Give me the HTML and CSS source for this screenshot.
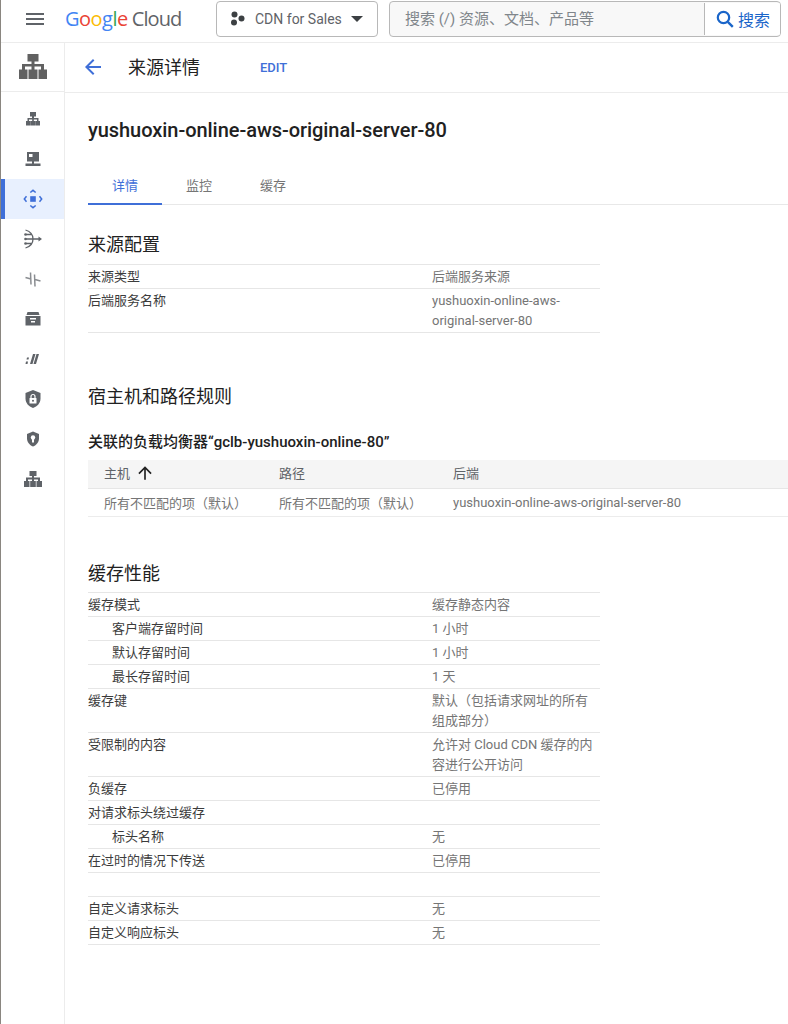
FILE: index.html
```html
<!DOCTYPE html>
<html lang="zh-CN">
<head>
<meta charset="utf-8">
<title>来源详情</title>
<link rel="stylesheet" href="styles.css">
</head>
<body>
<div class="app">
<header class="topbar">
  <button class="menu" aria-label="menu"><svg width="24" height="24" viewBox="0 0 24 24"><path d="M3 18h18v-2H3v2zm0-5h18v-2H3v2zm0-7v2h18V6H3z" fill="#5f6368"/></svg></button>
  <div class="logo"><span class="lb">G</span><span class="lr">o</span><span class="ly">o</span><span class="lb">g</span><span class="lg">l</span><span class="lr">e</span><span class="cloud">Cloud</span></div>
  <button class="project">
    <svg width="18" height="18" viewBox="0 0 18 18" fill="#3c4043"><circle cx="5.500" cy="4.500" r="3"/><circle cx="5" cy="12.500" r="3"/><circle cx="12.500" cy="8.500" r="3"/></svg>
    <span class="project-name">CDN for Sales</span>
    <span class="caret"></span>
  </button>
  <div class="search">
    <span class="search-text">搜索 (/) 资源、文档、产品等</span>
    <span class="search-btn"><svg width="20" height="20" viewBox="0 0 20 20"><circle cx="8.500" cy="8.500" r="5.700" fill="none" stroke="#1a65c9" stroke-width="2.200"/><path d="M12.800 12.800l5 5" stroke="#1a65c9" stroke-width="2.400"/></svg>搜索</span>
  </div>
</header>
<div class="body">
<nav class="sidebar">
  <div class="side-head"><svg width="28" height="25" viewBox="0 0 28 25" fill="#616161"><path d="M8.500 0h11v7.500h-4v2.500H25v5.500h3V25h-8.500v-9.500H22v-3h-6.500v3H18.500V25h-9v-9.500h3v-3H6v3h2.500V25H0v-9.500h3V10h9.500V7.500h-4z"/></svg></div>
  <a class="side-item"><svg width="16" height="16" viewBox="0 0 16 16" fill="#5f6368"><path d="M5 1h6v4.500H9V7h4.500v3H15v4.500h-4.500V10H12V8.500H8.800V10H10.300v4.500H5.700V10h1.500V8.500H4V10h1.500v4.500H1V10h1.500V7H7V5.500H5z"/></svg></a>
  <a class="side-item"><svg width="18" height="18" viewBox="0 0 18 18" fill="#5f6368"><path d="M3 2h12v9.500H3zM1.500 13.500h15V16h-15z"/><rect x="5" y="4" width="3.500" height="3" fill="#fff"/><rect x="8" y="11" width="2" height="3"/></svg></a>
  <a class="side-item active"><svg width="20" height="20" viewBox="0 0 20 20" fill="none" stroke="#3f6fd8" stroke-width="1.500"><rect x="7.200" y="7.200" width="5.600" height="5.600" fill="#3f6fd8" stroke="none"/><path d="M7.300 3.500L10 1.300l2.700 2.200M7.300 16.500l2.700 2.200 2.700-2.200M3.500 7.300L1.300 10l2.200 2.700M16.500 7.300l2.200 2.700-2.200 2.700"/></svg></a>
  <a class="side-item"><svg width="20" height="20" viewBox="0 0 20 20" fill="none" stroke="#5f6368" stroke-width="1.300"><path d="M2.500 1c5 1.500 7.500 5 7.500 9s-2.500 7.500-7.500 9M3 5.500h5.500M3 10h14M3 14.500h5.500"/><circle cx="2.500" cy="5.500" r="1.300" fill="#5f6368" stroke="none"/><circle cx="2.500" cy="10" r="1.300" fill="#5f6368" stroke="none"/><circle cx="2.500" cy="14.500" r="1.300" fill="#5f6368" stroke="none"/><path d="M15.500 7.500l3.500 2.500-3.500 2.500z" fill="#5f6368" stroke="none"/></svg></a>
  <a class="side-item dim"><svg width="18" height="18" viewBox="0 0 18 18" fill="none" stroke="#8a8d91" stroke-width="1.500"><path d="M1.500 7.500L7 9M11 9.500l5.500 1.500M6.500 2.500l.5 12M10.500 4.500l.5 12"/></svg></a>
  <a class="side-item"><svg width="18" height="18" viewBox="0 0 18 18" fill="#5f6368"><path d="M3.500 2h11l1 3h-13zM1.500 6h15v9.500h-15z"/><rect x="6" y="8" width="6" height="1.500" fill="#fff"/><rect x="7" y="11" width="4" height="1.500" fill="#fff"/></svg></a>
  <a class="side-item"><svg width="18" height="18" viewBox="0 0 18 18" fill="#5f6368"><path d="M9 4h2.500L8.500 14H6zM12.500 4H15l-3 10H9.500zM3 7.500h2L4.500 9.500h-2zM2 11.500h2L3.500 14h-2z"/></svg></a>
  <a class="side-item"><svg width="20" height="20" viewBox="0 0 20 20"><path d="M10 1l7.500 3v5.500c0 4.500-3.200 8-7.500 9.500-4.300-1.500-7.500-5-7.500-9.500V4z" fill="#5f6368"/><rect x="6.500" y="9" width="7" height="5.500" rx=".6" fill="#fff"/><path d="M8 9V7.500a2 2 0 014 0V9" fill="none" stroke="#fff" stroke-width="1.200"/><circle cx="10" cy="11.700" r="1" fill="#5f6368"/></svg></a>
  <a class="side-item"><svg width="18" height="18" viewBox="0 0 18 18"><path d="M9 1.500l6 2.500v4.500c0 3.700-2.500 6.600-6 8-3.500-1.400-6-4.300-6-8V4z" fill="#5f6368"/><circle cx="9" cy="7.500" r="2.200" fill="#fff"/><rect x="8" y="8" width="2" height="4.500" fill="#fff"/></svg></a>
  <a class="side-item"><svg width="18" height="16" viewBox="0 0 18 16" fill="#5f6368"><path d="M5.500 0h7v5H10v1.500h6V10h2v6h-5.500v-6H14V8.500H10V10h1.800v6H6.200v-6H8V8.500H4V10h1.500v6H0v-6h2V6.500h6V5H5.500z"/></svg></a>
</nav>
<main class="main">
  <div class="page-head">
    <svg class="back" width="24" height="24" viewBox="0 0 24 24"><path d="M20 11H7.830l5.590-5.590L12 4l-8 8 8 8 1.410-1.410L7.830 13H20v-2z" fill="#3f6fd8"/></svg>
    <h1 class="page-title">来源详情</h1>
    <a class="edit">EDIT</a>
  </div>
  <div class="content">
    <h2 class="name">yushuoxin-online-aws-original-server-80</h2>
    <div class="tabs">
      <span class="tab on">详情</span><span class="tab">监控</span><span class="tab">缓存</span>
    </div>
    <h3 class="sec first">来源配置</h3>
    <div class="kv">
      <div class="row"><span class="k">来源类型</span><span class="v">后端服务来源</span></div>
      <div class="row"><span class="k">后端服务名称</span><span class="v">yushuoxin-online-aws-original-server-80</span></div>
    </div>
    <h3 class="sec hosts">宿主机和路径规则</h3>
    <h4 class="sub">关联的负载均衡器“gclb-yushuoxin-online-80”</h4>
    <table class="tbl">
      <thead><tr><th class="c1">主机<svg class="sort" width="20" height="20" viewBox="0 0 24 24"><path d="M4 12l1.410 1.410L11 7.830V20h2V7.830l5.580 5.590L20 12l-8-8-8 8z" fill="#212121"/></svg></th><th class="c2">路径</th><th>后端</th></tr></thead>
      <tbody><tr><td>所有不匹配的项（默认）</td><td>所有不匹配的项（默认）</td><td>yushuoxin-online-aws-original-server-80</td></tr></tbody>
    </table>
    <h3 class="sec perf">缓存性能</h3>
    <div class="kv">
      <div class="row"><span class="k">缓存模式</span><span class="v">缓存静态内容</span></div>
      <div class="row"><span class="k in">客户端存留时间</span><span class="v">1 小时</span></div>
      <div class="row"><span class="k in">默认存留时间</span><span class="v">1 小时</span></div>
      <div class="row"><span class="k in">最长存留时间</span><span class="v">1 天</span></div>
      <div class="row"><span class="k">缓存键</span><span class="v">默认（包括请求网址的所有组成部分）</span></div>
      <div class="row"><span class="k">受限制的内容</span><span class="v">允许对 Cloud CDN 缓存的内容进行公开访问</span></div>
      <div class="row"><span class="k">负缓存</span><span class="v">已停用</span></div>
      <div class="row"><span class="k">对请求标头绕过缓存</span><span class="v"></span></div>
      <div class="row"><span class="k in">标头名称</span><span class="v">无</span></div>
      <div class="row"><span class="k">在过时的情况下传送</span><span class="v">已停用</span></div>
      <div class="row"><span class="k"></span><span class="v"></span></div>
      <div class="row"><span class="k">自定义请求标头</span><span class="v">无</span></div>
      <div class="row"><span class="k">自定义响应标头</span><span class="v">无</span></div>
    </div>
  </div>
</main>
</div>
</div>
</body>
</html>
```
FILE: styles.css
```css
* { box-sizing: border-box; }
html, body { margin: 0; padding: 0; height: 100%; overflow: hidden; background: #fff; }
body { font-family: Roboto, "Noto Sans CJK SC", sans-serif; color: #212121; font-size: 13px; }
h1, h2, h3, h4 { margin: 0; font-weight: 400; }
.app { height: 1024px; display: flex; flex-direction: column; border-left: 1px solid #8a8680; }
.topbar { height: 43px; flex: none; display: flex; align-items: flex-start; border-bottom: 1px solid #ececec; padding-top: 1px; }
.menu { width: 24px; height: 24px; padding: 0; border: 0; background: none; margin: 6px 0 0 22px; }
.logo { width: 151px; margin-left: 18px; height: 36px; line-height: 35px; font-family: "Open Sans", sans-serif; font-size: 20px; letter-spacing: -.5px; white-space: nowrap; }
.lb { color: #4285f4; } .lr { color: #ea4335; } .ly { color: #fbbc05; } .lg { color: #34a853; }
.cloud { color: #5f6368; margin-left: 4px; letter-spacing: -.9px; }
.project { width: 162px; height: 36px; display: flex; align-items: center; padding: 0 14px 0 12px; background: #fff; border: 1px solid #b8b8b8; border-radius: 4px; font: 14px Roboto, sans-serif; color: #5f6368; }
.project-name { margin-left: 8px; flex: 1; text-align: left; white-space: nowrap; }
.caret { width: 0; height: 0; border-left: 6px solid transparent; border-right: 6px solid transparent; border-top: 6px solid #3c4043; }
.search { width: 392px; height: 36px; margin-left: 11px; display: flex; align-items: stretch; background: #f8f8f8; border: 1px solid #b8b8b8; border-radius: 4px; overflow: hidden; }
.search-text { flex: 1; padding-left: 15px; line-height: 34px; font-size: 15px; color: #80868b; white-space: nowrap; }
.search-btn { width: 76px; margin: 1px 0; display: flex; align-items: center; gap: 3px; padding-left: 10px; background: #fff; border-left: 1px solid #b8b8b8; color: #1a65c9; font-size: 16px; white-space: nowrap; }
.body { flex: 1; display: flex; min-height: 0; }
.sidebar { width: 64px; flex: none; border-right: 1px solid #ececec; }
.side-head { height: 49px; display: flex; align-items: center; justify-content: center; border-bottom: 1px solid #ececec; margin-bottom: 7px; padding-bottom: 2px; }
.side-item { height: 40px; display: flex; align-items: center; justify-content: center; }
.side-item.active { background: #e8f0fe; box-shadow: inset 4px 0 0 #3f6fd8; }
.main { flex: 1; min-width: 0; }
.page-head { height: 50px; display: flex; align-items: center; border-bottom: 1px solid #ececec; padding: 0 0 0 16px; }
.back { flex: none; margin-top: -2px; }
.page-title { font-size: 18px; line-height: 26px; color: #212121; margin: 0 0 0 23px; }
.edit { margin-left: 60px; font-size: 13px; font-weight: 500; color: #3f6fd8; }
.content { padding: 0 0 0 23px; }
.name { font-size: 20px; font-weight: 500; line-height: 28px; padding-top: 23px; white-space: nowrap; letter-spacing: -.05px; }
.tabs { margin-top: 20px; height: 41px; display: flex; border-bottom: 1px solid #e8e8e8; }
.tab { width: 74px; height: 41px; padding-top: 12px; line-height: 20px; text-align: center; color: #757575; font-size: 13px; }
.tab.on { color: #3f6fd8; border-bottom: 2px solid #3f6fd8; }
.sec { font-size: 18px; line-height: 26px; color: #212121; }
.sec.first { margin-top: 27px; margin-bottom: 6px; }
.hosts { margin-top: 51px; }
.perf { margin-top: 44px; margin-bottom: 5px; }
.kv { width: 512px; border-top: 1px solid #e6e6e6; }
.row { display: flex; border-bottom: 1px solid #e6e6e6; min-height: 24px; line-height: 20px; padding: 2px 0 1px; }
.k { width: 344px; flex: none; color: #3c3c3c; }
.k.in { padding-left: 24px; }
.v { flex: 1; color: #757575; word-break: break-word; }
.sub { font-size: 15px; font-weight: 500; line-height: 20px; margin-top: 22px; color: #212121; }
.tbl { width: 700px; margin-top: 8px; border-collapse: collapse; font-size: 13px; table-layout: fixed; }
.tbl th { height: 28px; padding: 0 0 2px 16px; text-align: left; font-weight: 400; background: #f5f5f5; border-bottom: 1px solid #e6e6e6; color: #5f6368; }
.tbl .c1 { width: 175px; }
.tbl .c2 { width: 174px; }
.tbl td { height: 28px; padding: 0 0 0 16px; color: #757575; border-bottom: 1px solid #ececec; white-space: nowrap; }
.sort { margin-left: 5px; vertical-align: -5px; }
```
